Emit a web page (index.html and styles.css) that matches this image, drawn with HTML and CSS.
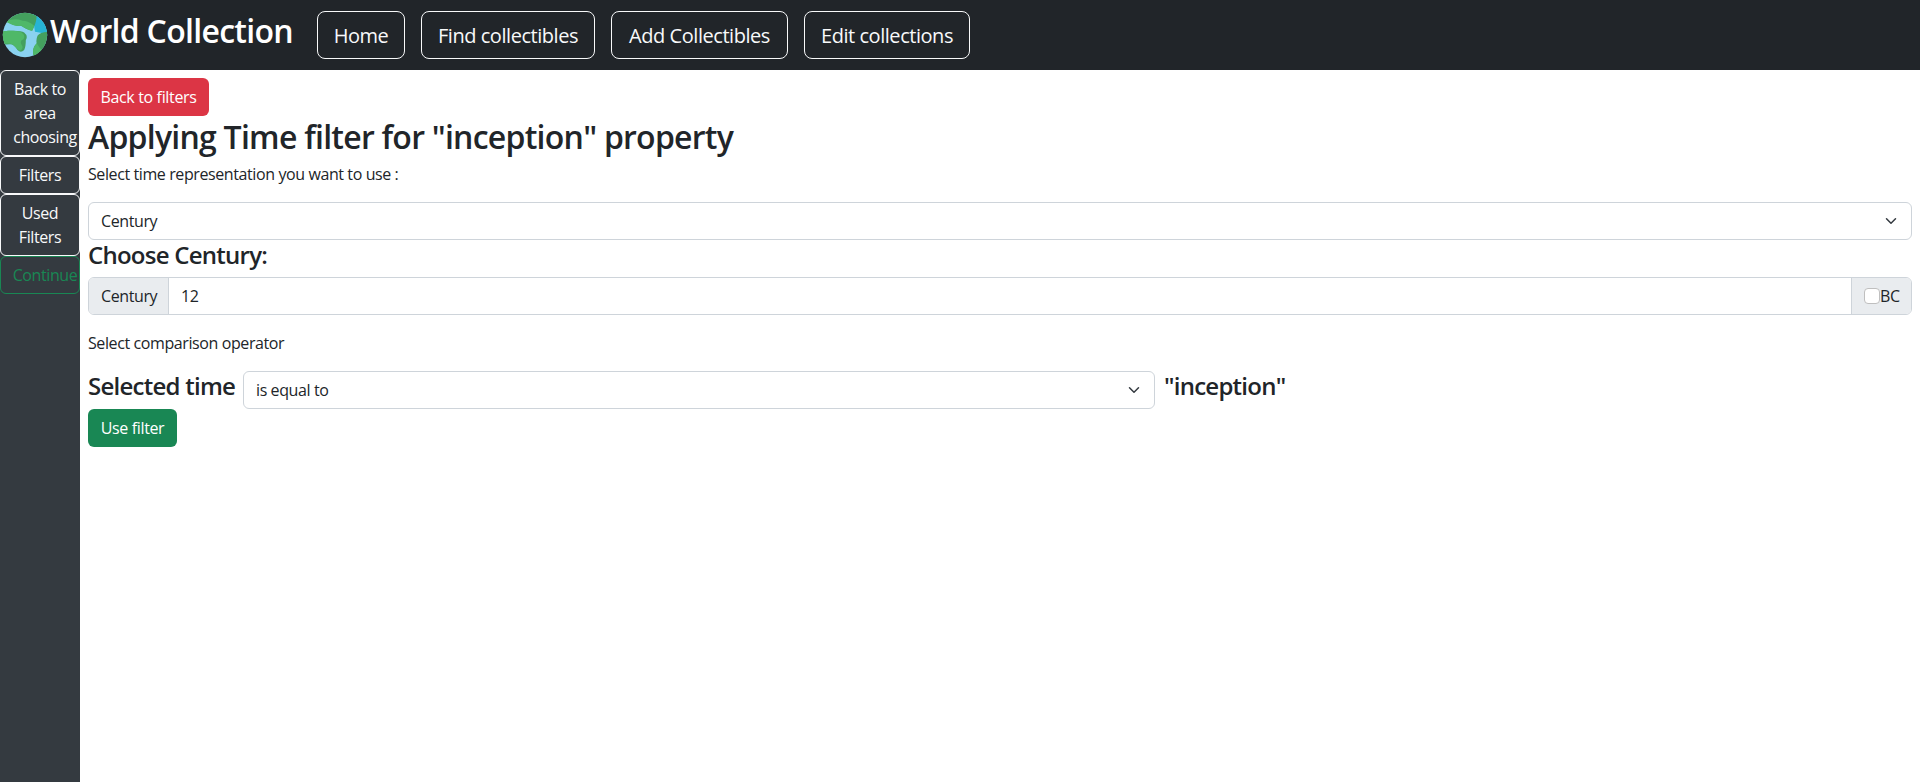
FILE: index.html
```html
<!DOCTYPE html>
<html lang="en">
<head>
<meta charset="utf-8">
<title>World Collection</title>
<link rel="stylesheet" href="styles.css">
</head>
<body>
<header class="navbar">
  <svg class="logo" viewBox="0 0 60 60" width="50" height="50">
    <defs><clipPath id="globe"><circle cx="30" cy="30" r="26.6"/></clipPath></defs>
    <g clip-path="url(#globe)">
      <rect width="60" height="60" fill="#8ad2f0"/>
      <path d="M38 0H60V34L52 28 42 26Z" fill="#27b4d4"/>
      <path d="M5 16L20 0H40L44 8Q43 18 38 25Q31 23 25 19Q18 20 9 14Z" fill="#44a05e"/>
      <path d="M7 14Q17 9 27 13Q34 13 41 19L39 25Q32 24 26 19Q17 20 7 14Z" fill="#4fb868"/>
      <path d="M0 26L10 25Q25 24 29 27Q34 31 31 36Q31 44 29 48Q25 52 21 48Q17 41 12 41L0 42Z" fill="#44a05e"/>
      <path d="M0 26L10 25Q21 24 26 27Q31 31 28 35Q23 37 26 42Q29 46 24 49Q20 47 17 43Q14 39 0 41Z" fill="#4fb868"/>
      <path d="M60 26Q48 26 45 31Q43 36 44 40Q37 47 41 57L60 60Z" fill="#44a05e"/>
      <path d="M44 40Q37 47 41 57L53 51Q48 47 44 40Z" fill="#4fb868"/>
    </g>
  </svg>
  <h1 class="brand"><span>World Collection</span></h1>
  <nav class="nav">
    <a class="nav-btn home"><span>Home</span></a>
    <a class="nav-btn find"><span>Find collectibles</span></a>
    <a class="nav-btn add"><span>Add Collectibles</span></a>
    <a class="nav-btn edit"><span>Edit collections</span></a>
  </nav>
</header>
<div class="layout">
  <aside class="sidebar">
    <a class="side-btn area"><span>Back to</span><span>area</span><span class="wide">choosing</span></a>
    <a class="side-btn">Filters</a>
    <a class="side-btn">Used<br>Filters</a>
    <a class="side-btn continue">Continue</a>
  </aside>
  <main class="content">
    <a class="btn danger"><span>Back to filters</span></a>
    <h2 class="title"><span>Applying Time filter for "inception" property</span></h2>
    <p class="text"><span>Select time representation you want to use :</span></p>
    <div class="select"><span>Century</span>
      <svg class="chevron" viewBox="0 0 16 16"><path d="m2 5 6 6 6-6"/></svg></div>
    <h4 class="subtitle"><span>Choose Century:</span></h4>
    <div class="input-group">
      <div class="addon century"><span>Century</span></div>
      <div class="field"><span>12</span></div>
      <div class="addon era"><i class="check"></i><span>BC</span></div>
    </div>
    <p class="text"><span>Select comparison operator</span></p>
    <div class="compare">
      <h4 class="subtitle selected"><span>Selected time</span></h4>
      <div class="select operator"><span>is equal to</span>
        <svg class="chevron" viewBox="0 0 16 16"><path d="m2 5 6 6 6-6"/></svg></div>
      <h4 class="subtitle"><span class="prop">"inception"</span></h4>
    </div>
    <a class="btn success"><span>Use filter</span></a>
  </main>
</div>
</body>
</html>
```
FILE: styles.css
```css
* { box-sizing: border-box; }
body {
  margin: 0;
  height: 782px;
  display: flex;
  flex-direction: column;
  overflow: hidden;
  background: #fff;
  color: #212529;
  font: 16px/24px "Open Sans", "Noto Sans", sans-serif;
  letter-spacing: -0.4px;
}
h1, h2, h4, p { margin: 0; white-space: nowrap; }
h1, h2, h4 { font-weight: 600; }

.navbar {
  height: 70px;
  flex: none;
  display: flex;
  align-items: flex-start;
  background: #212529;
  color: #fff;
}
.logo { margin-top: 10px; flex: none; }
.brand { width: 251px; padding-top: 12px; font-size: 32px; line-height: 38px; letter-spacing: -0.7px; }
.nav { display: flex; gap: 16px; padding: 11px 16px; }
.nav-btn {
  height: 48px;
  padding-top: 2px;
  display: flex;
  align-items: center;
  justify-content: center;
  border: 1px solid #f8f9fa;
  border-radius: 8px;
  color: #f8f9fa;
  font-size: 20px;
  letter-spacing: -0.45px;
  white-space: nowrap;
}
.home { width: 88px; }
.find { width: 174px; }
.add { width: 177px; }
.edit { width: 166px; }

.layout { flex: 1; display: flex; }
.sidebar { width: 80px; flex: none; background: #343a40; }
.side-btn {
  display: flex;
  justify-content: center;
  padding: 6px 0;
  border: 1px solid #f8f9fa;
  border-radius: 6px;
  color: #f8f9fa;
  text-align: center;
}
.area { flex-direction: column; }
.wide { padding-left: 10px; }
.continue { padding-left: 10px; border-color: #198754; color: #198754; }

.content { flex: 1; padding: 8px; }
.btn {
  height: 38px;
  display: flex;
  align-items: center;
  justify-content: center;
  border-radius: 6px;
  color: #fff;
  letter-spacing: -0.35px;
}
.danger { width: 121px; background: #dc3545; }
.success { width: 89px; background: #198754; }
.title { padding-top: 2px; margin-bottom: 6px; font-size: 32px; line-height: 38.4px; letter-spacing: -0.75px; }
.text { margin-bottom: 16px; }
.subtitle { padding-top: 1px; margin-bottom: 7px; font-size: 24px; line-height: 28.8px; letter-spacing: -0.75px; }
.select {
  height: 38px;
  display: flex;
  align-items: center;
  justify-content: space-between;
  padding: 0 12px;
  border: 1px solid #ced4da;
  border-radius: 6px;
}
.chevron { width: 16px; height: 12px; fill: none; stroke: #343a40; stroke-width: 2; stroke-linecap: round; stroke-linejoin: round; }
.input-group {
  height: 38px;
  margin-bottom: 16px;
  display: flex;
  border: 1px solid #ced4da;
  border-radius: 6px;
  overflow: hidden;
}
.addon { display: flex; align-items: center; padding: 0 12px; background: #e9ecef; }
.century { width: 80px; border-right: 1px solid #ced4da; }
.field { flex: 1; display: flex; align-items: center; padding: 0 12px; }
.era { width: 60px; border-left: 1px solid #ced4da; }
.check { width: 16px; height: 16px; flex: none; border: 1px solid #bfbfbf; border-radius: 4px; background: #fff; }
.compare { height: 38px; display: flex; }
.compare .subtitle { margin: 0; }
.selected { width: 155px; }
.operator { width: 912px; margin-right: 9px; }
```
